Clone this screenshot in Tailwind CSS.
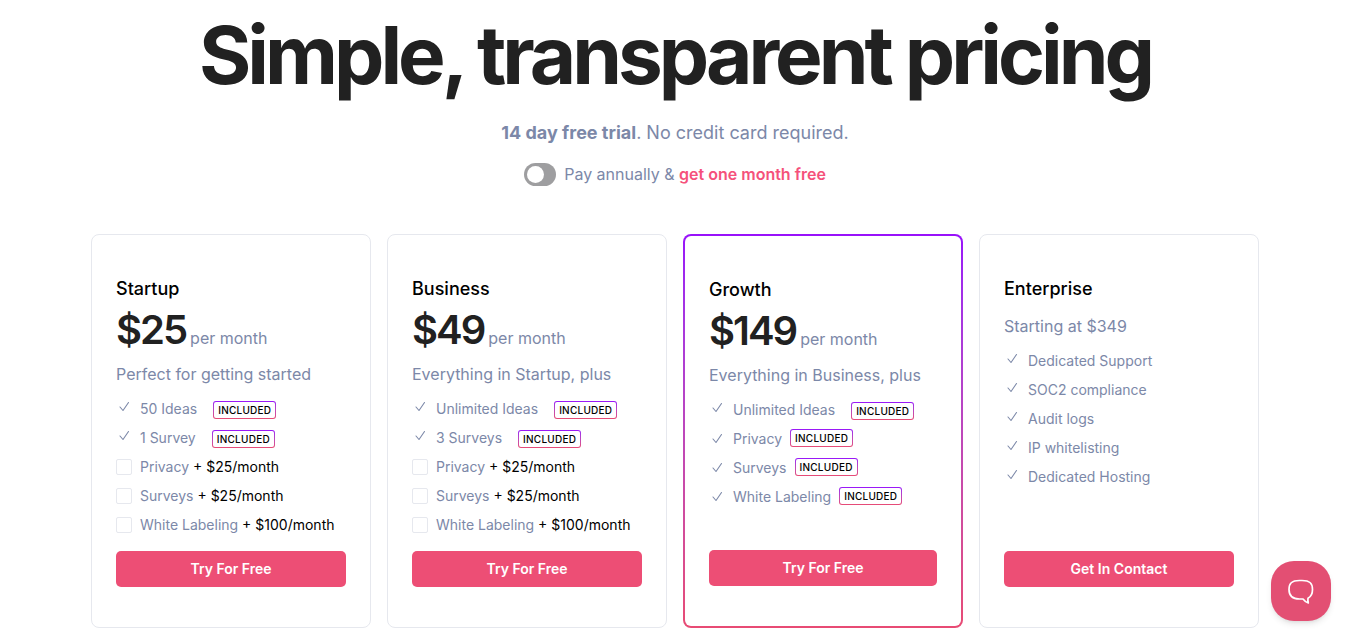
<!DOCTYPE html>
<html lang="en">
<head>
    <meta charset="UTF-8">
    <meta name="viewport" content="width=device-width, initial-scale=1.0">
    <title>Pricing</title>
    <script src="https://cdn.jsdelivr.net/npm/@tailwindcss/browser@4"></script>
    <style>
        body {
            font-family: 'Inter', sans-serif;
        }
    </style>
</head>
<body class="bg-white text-[#7c88a8]">

<!-- Shared icons -->
<svg class="hidden" xmlns="http://www.w3.org/2000/svg">
    <symbol id="check" viewBox="0 0 16 16"><path d="M4 8L7 11.5L12.5 3.5" fill="none" stroke="currentColor" stroke-width="1.1" stroke-linecap="round" stroke-linejoin="round"></path></symbol>
</svg>

<header class="text-center pt-[7px] px-6">
    <h1 class="text-[80px] leading-24 font-bold tracking-tighter text-[#212121]">Simple, transparent pricing</h1>
    <p class="mt-[18px] text-lg leading-6"><strong class="font-bold">14 day free trial</strong>. No credit card required.</p>
    <div class="mt-[15px] flex items-center justify-center gap-2 h-7">
        <input type="checkbox" id="annual" role="switch"
               class="appearance-none w-8 h-[23px] p-[3px] rounded-full bg-[#9e9ea0] before:block before:size-[17px] before:rounded-full before:bg-white checked:bg-[#ed4e75] checked:before:ml-auto">
        <label for="annual">Pay annually &amp; <span class="font-semibold text-[#f5517b]">get one month free</span></label>
    </div>
</header>

<main class="max-w-[1168px] mx-auto mt-[46px] pb-1 grid grid-cols-4 gap-4">

    <!-- Startup -->
    <section class="flex flex-col min-h-[394px] px-6 py-10 border border-[#e6e8ee] rounded-lg">
        <h2 class="text-lg leading-7 font-medium text-black">Startup</h2>
        <p class="mt-1 flex items-baseline gap-1"><span class="text-[40px] leading-[46px] font-semibold tracking-tighter text-[#212121]">$25</span> <span>per month</span></p>
        <p class="mt-[9px] mb-2 leading-6">Perfect for getting started</p>
        <ul class="text-sm">
            <li class="flex items-center h-[29px]"><svg class="size-4 mr-2 mb-1"><use href="#check"></use></svg>50 Ideas<span class="ml-4 mt-[3px] p-px rounded-[3px] bg-linear-to-b from-[#9810fa] to-[#e84b74]"><span class="block px-1 rounded-[2px] bg-white text-[10px] leading-4 font-medium tracking-wide text-black">INCLUDED</span></span></li>
            <li class="flex items-center h-[29px]"><svg class="size-4 mr-2 mb-1"><use href="#check"></use></svg>1 Survey<span class="ml-4 mt-[3px] p-px rounded-[3px] bg-linear-to-b from-[#9810fa] to-[#e84b74]"><span class="block px-1 rounded-[2px] bg-white text-[10px] leading-4 font-medium tracking-wide text-black">INCLUDED</span></span></li>
            <li class="flex items-center h-[29px]"><input type="checkbox" id="s-privacy" class="appearance-none size-4 mr-2 border border-[#e6e8ee] rounded-[2px] checked:bg-[#ed4e75]"><label for="s-privacy">Privacy <span class="text-black">+ $25/month</span></label></li>
            <li class="flex items-center h-[29px]"><input type="checkbox" id="s-surveys" class="appearance-none size-4 mr-2 border border-[#e6e8ee] rounded-[2px] checked:bg-[#ed4e75]"><label for="s-surveys">Surveys <span class="text-black">+ $25/month</span></label></li>
            <li class="flex items-center h-[29px]"><input type="checkbox" id="s-label" class="appearance-none size-4 mr-2 border border-[#e6e8ee] rounded-[2px] checked:bg-[#ed4e75]"><label for="s-label">White Labeling <span class="text-black">+ $100/month</span></label></li>
        </ul>
        <button class="mt-auto h-9 rounded-[5px] bg-[#ed4e75] text-sm font-semibold text-white">Try For Free</button>
    </section>

    <!-- Business -->
    <section class="flex flex-col min-h-[394px] px-6 py-10 border border-[#e6e8ee] rounded-lg">
        <h2 class="text-lg leading-7 font-medium text-black">Business</h2>
        <p class="mt-1 flex items-baseline gap-1"><span class="text-[40px] leading-[46px] font-semibold tracking-tighter text-[#212121]">$49</span> <span>per month</span></p>
        <p class="mt-[9px] mb-2 leading-6">Everything in Startup, plus</p>
        <ul class="text-sm">
            <li class="flex items-center h-[29px]"><svg class="size-4 mr-2 mb-1"><use href="#check"></use></svg>Unlimited Ideas<span class="ml-4 mt-[3px] p-px rounded-[3px] bg-linear-to-b from-[#9810fa] to-[#e84b74]"><span class="block px-1 rounded-[2px] bg-white text-[10px] leading-4 font-medium tracking-wide text-black">INCLUDED</span></span></li>
            <li class="flex items-center h-[29px]"><svg class="size-4 mr-2 mb-1"><use href="#check"></use></svg>3 Surveys<span class="ml-4 mt-[3px] p-px rounded-[3px] bg-linear-to-b from-[#9810fa] to-[#e84b74]"><span class="block px-1 rounded-[2px] bg-white text-[10px] leading-4 font-medium tracking-wide text-black">INCLUDED</span></span></li>
            <li class="flex items-center h-[29px]"><input type="checkbox" id="b-privacy" class="appearance-none size-4 mr-2 border border-[#e6e8ee] rounded-[2px] checked:bg-[#ed4e75]"><label for="b-privacy">Privacy <span class="text-black">+ $25/month</span></label></li>
            <li class="flex items-center h-[29px]"><input type="checkbox" id="b-surveys" class="appearance-none size-4 mr-2 border border-[#e6e8ee] rounded-[2px] checked:bg-[#ed4e75]"><label for="b-surveys">Surveys <span class="text-black">+ $25/month</span></label></li>
            <li class="flex items-center h-[29px]"><input type="checkbox" id="b-label" class="appearance-none size-4 mr-2 border border-[#e6e8ee] rounded-[2px] checked:bg-[#ed4e75]"><label for="b-label">White Labeling <span class="text-black">+ $100/month</span></label></li>
        </ul>
        <button class="mt-auto h-9 rounded-[5px] bg-[#ed4e75] text-sm font-semibold text-white">Try For Free</button>
    </section>

    <!-- Growth, with the gradient border -->
    <section class="flex min-h-[394px] p-0.5 rounded-lg bg-linear-to-b from-[#9810fa] to-[#e84b74]">
        <div class="flex flex-col grow px-6 py-10 rounded-md bg-white">
            <h2 class="text-lg leading-7 font-medium text-black">Growth</h2>
            <p class="mt-1 flex items-baseline gap-1"><span class="text-[40px] leading-[46px] font-semibold tracking-tighter text-[#212121]">$149</span> <span>per month</span></p>
            <p class="mt-[9px] mb-2 leading-6">Everything in Business, plus</p>
            <ul class="text-sm">
                <li class="flex items-center h-[29px]"><svg class="size-4 mr-2 mb-1"><use href="#check"></use></svg>Unlimited Ideas<span class="ml-4 mt-[3px] p-px rounded-[3px] bg-linear-to-b from-[#9810fa] to-[#e84b74]"><span class="block px-1 rounded-[2px] bg-white text-[10px] leading-4 font-medium tracking-wide text-black">INCLUDED</span></span></li>
                <li class="flex items-center h-[29px]"><svg class="size-4 mr-2 mt-px"><use href="#check"></use></svg>Privacy<span class="ml-2 mb-px p-px rounded-[3px] bg-linear-to-b from-[#9810fa] to-[#e84b74]"><span class="block px-1 rounded-[2px] bg-white text-[10px] leading-4 font-medium tracking-wide text-black">INCLUDED</span></span></li>
                <li class="flex items-center h-[29px]"><svg class="size-4 mr-2 mt-px"><use href="#check"></use></svg>Surveys<span class="ml-2 mb-px p-px rounded-[3px] bg-linear-to-b from-[#9810fa] to-[#e84b74]"><span class="block px-1 rounded-[2px] bg-white text-[10px] leading-4 font-medium tracking-wide text-black">INCLUDED</span></span></li>
                <li class="flex items-center h-[29px]"><svg class="size-4 mr-2 mt-px"><use href="#check"></use></svg>White Labeling<span class="ml-2 mb-px p-px rounded-[3px] bg-linear-to-b from-[#9810fa] to-[#e84b74]"><span class="block px-1 rounded-[2px] bg-white text-[10px] leading-4 font-medium tracking-wide text-black">INCLUDED</span></span></li>
            </ul>
            <button class="mt-auto h-9 rounded-[5px] bg-[#ed4e75] text-sm font-semibold text-white">Try For Free</button>
        </div>
    </section>

    <!-- Enterprise -->
    <section class="flex flex-col min-h-[394px] px-6 py-10 border border-[#e6e8ee] rounded-lg">
        <h2 class="text-lg leading-7 font-medium text-black">Enterprise</h2>
        <p class="mt-[11px] mb-2 leading-6">Starting at $349</p>
        <ul class="text-sm">
            <li class="flex items-center h-[29px]"><svg class="size-4 mr-2 mb-1"><use href="#check"></use></svg>Dedicated Support</li>
            <li class="flex items-center h-[29px]"><svg class="size-4 mr-2 mb-1"><use href="#check"></use></svg>SOC2 compliance</li>
            <li class="flex items-center h-[29px]"><svg class="size-4 mr-2 mb-1"><use href="#check"></use></svg>Audit logs</li>
            <li class="flex items-center h-[29px]"><svg class="size-4 mr-2 mb-1"><use href="#check"></use></svg>IP whitelisting</li>
            <li class="flex items-center h-[29px]"><svg class="size-4 mr-2 mb-1"><use href="#check"></use></svg>Dedicated Hosting</li>
        </ul>
        <button class="mt-auto h-9 rounded-[5px] bg-[#ed4e75] text-sm font-semibold text-white">Get In Contact</button>
    </section>
</main>

<!-- Chat launcher -->
<button aria-label="Open chat" class="fixed right-[19px] bottom-[10px] size-[60px] rounded-[23px] bg-[#e34f73] shadow-md flex items-center justify-center">
    <svg class="size-7" viewBox="0 0 28 28" fill="none" stroke="white" stroke-width="1.7" stroke-linejoin="round" xmlns="http://www.w3.org/2000/svg"><path d="M12.5 3.5C4.5 3.5 2 6.5 2 12.5S4.5 22 12.5 22H16C17.5 24 19 25.3 21.3 26C20.8 24.3 20.7 22.8 21 21.2C24.3 19.5 25.5 17 25.5 12.5C25.5 6.5 23 3.5 15 3.5Z"></path></svg>
</button>

</body>
</html>
